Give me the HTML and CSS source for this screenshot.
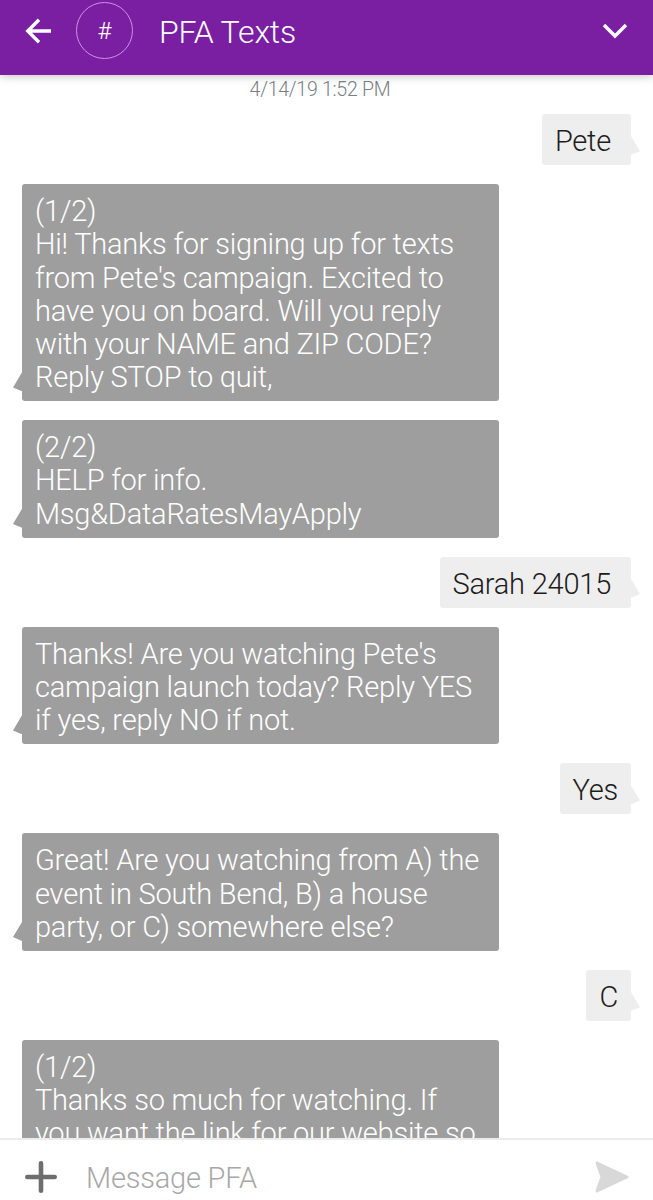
FILE: index.html
```html
<!DOCTYPE html>
<html lang="en">
<head>
<meta charset="utf-8">
<title>PFA Texts</title>
<link rel="stylesheet" href="styles.css">
</head>
<body>
<div class="app">
  <header class="bar">
    <svg class="back" width="28" height="26" viewBox="0 0 28 26"><path d="M27 13H4M15 1.8L3.8 13L15 24.2"/></svg>
    <div class="avatar">#</div>
    <h1 class="title"><span>PFA Texts</span></h1>
    <svg class="chevron" width="28" height="18" viewBox="0 0 28 18"><path d="M3 3L14 14L25 3"/></svg>
  </header>
  <main class="thread">
    <div class="time">4/14/19 1:52 PM</div>
    <div class="msg out spaced"><span>Pete</span></div>
    <div class="msg in"><span>(1/2)</span><br><span>Hi! Thanks for signing up for texts</span><br><span>from Pete's campaign. Excited to</span><br><span>have you on board. Will you reply</span><br><span>with your NAME and ZIP CODE?</span><br><span>Reply STOP to quit,</span></div>
    <div class="msg in"><span>(2/2)</span><br><span>HELP for info.</span><br><span>Msg&amp;DataRatesMayApply</span></div>
    <div class="msg out spaced"><span>Sarah 24015</span></div>
    <div class="msg in"><span>Thanks! Are you watching Pete's</span><br><span>campaign launch today? Reply YES</span><br><span>if yes, reply NO if not.</span></div>
    <div class="msg out"><span>Yes</span></div>
    <div class="msg in"><span>Great! Are you watching from A) the</span><br><span>event in South Bend, B) a house</span><br><span>party, or C) somewhere else?</span></div>
    <div class="msg out"><span>C</span></div>
    <div class="msg in partial"><span>(1/2)</span><br><span>Thanks so much for watching. If</span><br><span>you want the link for our website so</span></div>
  </main>
  <footer class="compose">
    <svg class="plus" width="32" height="32" viewBox="0 0 32 32"><path d="M16 2.3V29.7M2.3 16H29.7"/></svg>
    <div class="hint">Message PFA</div>
    <svg class="send" width="34" height="32" viewBox="0 0 34 32"><path d="M2 2L32 16L2 30L7 16Z"/></svg>
  </footer>
</div>
</body>
</html>
```
FILE: styles.css
```css
* { box-sizing: border-box; }
body { margin: 0; font-family: Roboto, "Open Sans", sans-serif; font-weight: 300; background: #fff; }
.app { display: flex; flex-direction: column; width: 653px; height: 1200px; overflow: hidden; }
.bar { position: relative; z-index: 1; display: flex; align-items: center; height: 75px; flex: none; padding: 0 24px 13px; background: #7b1fa2; color: #fff; box-shadow: 0 1px 9px rgba(0, 0, 0, .25); }
.bar svg { fill: none; stroke: #fff; stroke-width: 3.4; }
.avatar { width: 57px; height: 57px; margin: -1px 0 0 24px; border: 1px solid #cf8ee8; border-radius: 50%; font-size: 24px; line-height: 56px; text-align: center; }
.title { margin: 1px auto 0 26px; font-size: 32px; font-weight: 300; letter-spacing: -.15px; }
.thread { display: flex; flex-direction: column; gap: 19px; flex: 1; min-height: 0; overflow: hidden; padding: 0 22px; }
.time { height: 20px; padding-right: 13px; text-align: center; font-size: 19.5px; letter-spacing: -.25px; line-height: 29px; color: #788087; }
.msg { position: relative; flex: none; padding: 11px 13px 6.9px; border-radius: 3px; font-size: 29px; letter-spacing: -.22px; line-height: 33.2px; white-space: nowrap; }
.in { width: 477px; background: #9e9e9e; color: #fff; }
.out { align-self: flex-end; background: #eee; color: #1c1c1c; }
.spaced { padding-right: 20px; }
.msg::after { content: ""; position: absolute; bottom: 10px; width: 9px; height: 19px; }
.in::after { left: -9px; background: #9e9e9e; clip-path: polygon(100% 0, 100% 100%, 0 80%); }
.out::after { right: -9px; background: #eee; clip-path: polygon(0 0, 100% 80%, 0 100%); }
.partial::after { display: none; }
.compose { display: flex; align-items: center; height: 62px; flex: none; padding: 14px 24px 0 25px; border-top: 2px solid #ececec; }
.plus { fill: none; stroke: #6e6e6e; stroke-width: 4.6; stroke-linecap: round; }
.hint { flex: 1; margin: 2px 0 0 29px; font-size: 29px; letter-spacing: -.2px; color: #a8a8a8; }
.send { fill: #d8d8d8; stroke: #d8d8d8; stroke-width: 3; stroke-linejoin: round; }
```
